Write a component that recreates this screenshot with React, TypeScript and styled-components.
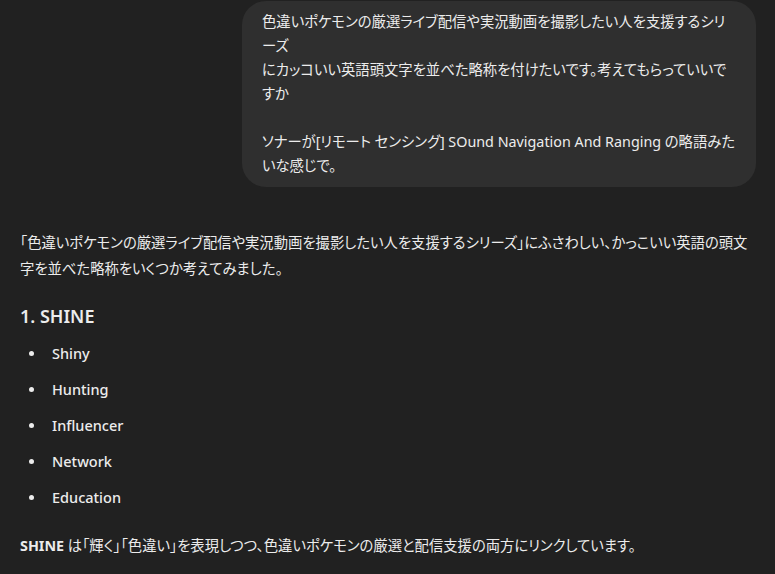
import React from 'react'
import styled, { createGlobalStyle } from 'styled-components'

const GlobalStyle = createGlobalStyle`
  html, body {
    margin: 0;
    padding: 0;
    background: #212121;
  }
  body {
    font-family: "Noto Sans", "Noto Sans CJK JP", sans-serif;
    color: #ececec;
    font-feature-settings: "palt";
  }
`

const userText = `色違いポケモンの厳選ライブ配信や実況動画を撮影したい人を支援するシリーズ
にカッコいい英語頭文字を並べた略称を付けたいです。考えてもらっていいですか

ソナーが[リモート センシング] SOund Navigation And Ranging の略語みたいな感じで。`

const items = ['Shiny', 'Hunting', 'Influencer', 'Network', 'Education']

const App = () => {
  return (
    <Page>
      <GlobalStyle />
      <UserRow>
        <Bubble>{userText}</Bubble>
      </UserRow>

      <Answer>
        <Para>
          「色違いポケモンの厳選ライブ配信や実況動画を撮影したい人を支援するシリーズ」にふさわしい、かっこいい英語の頭文字を並べた略称をいくつか考えてみました。
        </Para>
        <Heading>1. SHINE</Heading>
        <List>
          {items.map((item) => (
            <Item key={item}>{item}</Item>
          ))}
        </List>
        <Para>
          <strong>SHINE</strong> は「輝く」「色違い」を表現しつつ、色違いポケモンの厳選と配信支援の両方にリンクしています。
        </Para>
      </Answer>
    </Page>
  )
}

export default App

const Page = styled.div`
  width: 100%;
  height: 100vh;
  overflow: hidden;
  padding: 1px 19px 0 20px;
  box-sizing: border-box;
`

const UserRow = styled.div`
  display: flex;
  justify-content: flex-end;
`

const Bubble = styled.div`
  max-width: 474px;
  padding: 9px 20px;
  background: #2f2f2f;
  border-radius: 24px;
  font-size: 14.34px;
  line-height: 24px;
  white-space: pre-wrap;
`

const Answer = styled.div`
  margin-top: 43px;
  font-size: 14.34px;
  line-height: 26px;
`

const Para = styled.p`
  margin: 0;

  strong {
    font-weight: 700;
  }
`

const Heading = styled.h3`
  margin: 21px 0 11px;
  font-size: 18px;
  line-height: 26px;
  font-weight: 600;
`

const List = styled.ul`
  margin: 0 0 23px;
  padding-left: 32px;
  list-style: none;
  display: flex;
  flex-direction: column;
  gap: 10px;
`

const Item = styled.li`
  position: relative;
  font-size: 14.5px;
  font-weight: 500;

  &::before {
    content: '';
    position: absolute;
    left: -23px;
    top: 11px;
    width: 5px;
    height: 5px;
    border-radius: 50%;
    background: #ececec;
  }
`
